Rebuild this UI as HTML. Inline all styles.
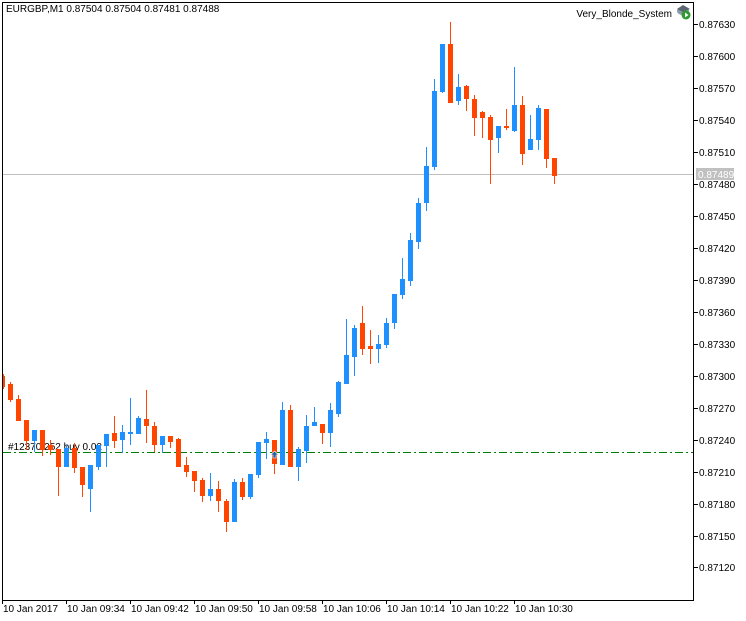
<!DOCTYPE html>
<html><head><meta charset="utf-8"><style>
html,body{margin:0;padding:0;background:#fff;width:746px;height:621px;overflow:hidden}
svg{display:block}
text{font-family:"Liberation Sans","DejaVu Sans",sans-serif;font-size:10px;fill:#000}
</style></head><body>
<svg width="746" height="621" viewBox="0 0 746 621" shape-rendering="crispEdges">
<rect width="746" height="621" fill="#fff"/>
<!-- current price line -->
<rect x="3" y="174" width="690" height="1" fill="#c0c0c0"/>
<!-- order line -->
<text x="8" y="450">#12370,252 buy 0.02</text>
<line x1="3" y1="452.5" x2="693" y2="452.5" stroke="#008000" stroke-width="1" stroke-dasharray="8 3 2 3"/>
<g id="c">
<g fill="#ff4500">
<rect x="3" y="374" width="1" height="15"/><rect x="3" y="376" width="2" height="11"/>
<rect x="10" y="382" width="1" height="20"/><rect x="8" y="384" width="5" height="16"/>
<rect x="18" y="395" width="1" height="26"/><rect x="16" y="399" width="5" height="22"/>
<rect x="26" y="420" width="1" height="30"/><rect x="24" y="420" width="5" height="21"/>
<rect x="42" y="430" width="1" height="26"/><rect x="40" y="430" width="5" height="20"/>
<rect x="50" y="440" width="1" height="15"/><rect x="48" y="445" width="5" height="5"/>
<rect x="58" y="449" width="1" height="47"/><rect x="56" y="449" width="5" height="18"/>
<rect x="74" y="443" width="1" height="30"/><rect x="72" y="448" width="5" height="20"/>
<rect x="82" y="467" width="1" height="30"/><rect x="80" y="467" width="5" height="18"/>
<rect x="114" y="416" width="1" height="32"/><rect x="112" y="433" width="5" height="8"/>
<rect x="146" y="390" width="1" height="53"/><rect x="144" y="419" width="5" height="7"/>
<rect x="154" y="422" width="1" height="30"/><rect x="152" y="426" width="5" height="19"/>
<rect x="170" y="436" width="1" height="12"/><rect x="168" y="436" width="5" height="6"/>
<rect x="178" y="438" width="1" height="29"/><rect x="176" y="439" width="5" height="28"/>
<rect x="186" y="457" width="1" height="20"/><rect x="184" y="465" width="5" height="7"/>
<rect x="194" y="471" width="1" height="21"/><rect x="192" y="471" width="5" height="10"/>
<rect x="202" y="478" width="1" height="24"/><rect x="200" y="480" width="5" height="16"/>
<rect x="218" y="481" width="1" height="31"/><rect x="216" y="489" width="5" height="12"/>
<rect x="226" y="499" width="1" height="33"/><rect x="224" y="501" width="5" height="21"/>
<rect x="242" y="478" width="1" height="22"/><rect x="240" y="482" width="5" height="15"/>
<rect x="274" y="440" width="1" height="34"/><rect x="272" y="440" width="5" height="24"/>
<rect x="290" y="405" width="1" height="62"/><rect x="288" y="410" width="5" height="57"/>
<rect x="322" y="424" width="1" height="20"/><rect x="320" y="424" width="5" height="9"/>
<rect x="362" y="306" width="1" height="49"/><rect x="360" y="323" width="5" height="26"/>
<rect x="370" y="330" width="1" height="34"/><rect x="368" y="346" width="5" height="3"/>
<rect x="450" y="22" width="1" height="81"/><rect x="448" y="44" width="5" height="59"/>
<rect x="466" y="85" width="1" height="26"/><rect x="464" y="86" width="5" height="13"/>
<rect x="474" y="95" width="1" height="41"/><rect x="472" y="99" width="5" height="19"/>
<rect x="482" y="111" width="1" height="27"/><rect x="480" y="112" width="5" height="6"/>
<rect x="490" y="115" width="1" height="69"/><rect x="488" y="117" width="5" height="23"/>
<rect x="506" y="109" width="1" height="21"/><rect x="504" y="126" width="5" height="2"/>
<rect x="522" y="96" width="1" height="69"/><rect x="520" y="105" width="5" height="49"/>
<rect x="546" y="109" width="1" height="59"/><rect x="544" y="109" width="5" height="50"/>
<rect x="554" y="158" width="1" height="26"/><rect x="552" y="158" width="5" height="18"/>
</g>
<g fill="#1e90ff">
<rect x="34" y="430" width="1" height="22"/><rect x="32" y="430" width="5" height="11"/>
<rect x="66" y="445" width="1" height="22"/><rect x="64" y="448" width="5" height="19"/>
<rect x="90" y="465" width="1" height="47"/><rect x="88" y="465" width="5" height="24"/>
<rect x="98" y="445" width="1" height="25"/><rect x="96" y="445" width="5" height="22"/>
<rect x="106" y="434" width="1" height="33"/><rect x="104" y="434" width="5" height="12"/>
<rect x="122" y="425" width="1" height="28"/><rect x="120" y="432" width="5" height="8"/>
<rect x="130" y="398" width="1" height="47"/><rect x="128" y="432" width="5" height="2"/>
<rect x="138" y="416" width="1" height="18"/><rect x="136" y="418" width="5" height="16"/>
<rect x="162" y="436" width="1" height="17"/><rect x="160" y="436" width="5" height="9"/>
<rect x="210" y="473" width="1" height="28"/><rect x="208" y="489" width="5" height="7"/>
<rect x="234" y="479" width="1" height="43"/><rect x="232" y="482" width="5" height="40"/>
<rect x="250" y="474" width="1" height="25"/><rect x="248" y="474" width="5" height="23"/>
<rect x="258" y="442" width="1" height="36"/><rect x="256" y="442" width="5" height="33"/>
<rect x="266" y="432" width="1" height="27"/><rect x="264" y="439" width="5" height="4"/>
<rect x="282" y="402" width="1" height="63"/><rect x="280" y="410" width="5" height="55"/>
<rect x="298" y="447" width="1" height="34"/><rect x="296" y="449" width="5" height="18"/>
<rect x="306" y="415" width="1" height="48"/><rect x="304" y="426" width="5" height="25"/>
<rect x="314" y="407" width="1" height="19"/><rect x="312" y="422" width="5" height="4"/>
<rect x="330" y="403" width="1" height="44"/><rect x="328" y="410" width="5" height="23"/>
<rect x="338" y="381" width="1" height="36"/><rect x="336" y="382" width="5" height="32"/>
<rect x="346" y="319" width="1" height="65"/><rect x="344" y="355" width="5" height="29"/>
<rect x="354" y="325" width="1" height="51"/><rect x="352" y="328" width="5" height="29"/>
<rect x="378" y="335" width="1" height="28"/><rect x="376" y="344" width="5" height="5"/>
<rect x="386" y="318" width="1" height="30"/><rect x="384" y="323" width="5" height="22"/>
<rect x="394" y="294" width="1" height="35"/><rect x="392" y="294" width="5" height="29"/>
<rect x="402" y="258" width="1" height="41"/><rect x="400" y="279" width="5" height="16"/>
<rect x="410" y="233" width="1" height="53"/><rect x="408" y="240" width="5" height="41"/>
<rect x="418" y="198" width="1" height="51"/><rect x="416" y="203" width="5" height="39"/>
<rect x="426" y="147" width="1" height="64"/><rect x="424" y="166" width="5" height="37"/>
<rect x="434" y="79" width="1" height="91"/><rect x="432" y="91" width="5" height="76"/>
<rect x="442" y="44" width="1" height="49"/><rect x="440" y="44" width="5" height="48"/>
<rect x="458" y="74" width="1" height="31"/><rect x="456" y="87" width="5" height="14"/>
<rect x="498" y="126" width="1" height="27"/><rect x="496" y="126" width="5" height="12"/>
<rect x="514" y="67" width="1" height="65"/><rect x="512" y="105" width="5" height="26"/>
<rect x="530" y="115" width="1" height="35"/><rect x="528" y="139" width="5" height="11"/>
<rect x="538" y="105" width="1" height="45"/><rect x="536" y="108" width="5" height="32"/>
</g>
</g>
<!-- buy arrow -->
<path d="M274.5 451 L278.5 455 L276 455 L276 458 L273 458 L273 455 L270.5 455 Z" fill="#1f5fa8" stroke="#fff" stroke-width="0.6" shape-rendering="auto"/>
<!-- frame -->
<rect x="2" y="2" width="691" height="1" fill="#000"/>
<rect x="2" y="2" width="1" height="599" fill="#000"/>
<rect x="693" y="2" width="1" height="599" fill="#000"/>
<rect x="2" y="600" width="692" height="1" fill="#000"/>
<!-- price axis -->
<g fill="#000">
<rect x="694" y="24" width="4" height="1"/><rect x="694" y="56" width="4" height="1"/><rect x="694" y="88" width="4" height="1"/>
<rect x="694" y="120" width="4" height="1"/><rect x="694" y="152" width="4" height="1"/><rect x="694" y="184" width="4" height="1"/>
<rect x="694" y="216" width="4" height="1"/><rect x="694" y="248" width="4" height="1"/><rect x="694" y="280" width="4" height="1"/>
<rect x="694" y="312" width="4" height="1"/><rect x="694" y="344" width="4" height="1"/><rect x="694" y="376" width="4" height="1"/>
<rect x="694" y="408" width="4" height="1"/><rect x="694" y="440" width="4" height="1"/><rect x="694" y="472" width="4" height="1"/>
<rect x="694" y="504" width="4" height="1"/><rect x="694" y="536" width="4" height="1"/><rect x="694" y="567" width="4" height="1"/>
</g>
<g>
<text x="699" y="28">0.87630</text><text x="699" y="60">0.87600</text><text x="699" y="92">0.87570</text>
<text x="699" y="124">0.87540</text><text x="699" y="156">0.87510</text><text x="699" y="188">0.87480</text>
<text x="699" y="220">0.87450</text><text x="699" y="252">0.87420</text><text x="699" y="284">0.87390</text>
<text x="699" y="316">0.87360</text><text x="699" y="348">0.87330</text><text x="699" y="380">0.87300</text>
<text x="699" y="412">0.87270</text><text x="699" y="444">0.87240</text><text x="699" y="476">0.87210</text>
<text x="699" y="508">0.87180</text><text x="699" y="540">0.87150</text><text x="699" y="571">0.87120</text>
</g>
<rect x="696" y="168" width="38" height="12" fill="#c0c0c0"/>
<text x="698" y="178" style="fill:#fff">0.87489</text>
<!-- time axis -->
<g fill="#000">
<rect x="2" y="601" width="1" height="3"/><rect x="66" y="601" width="1" height="3"/><rect x="130" y="601" width="1" height="3"/>
<rect x="194" y="601" width="1" height="3"/><rect x="258" y="601" width="1" height="3"/><rect x="322" y="601" width="1" height="3"/>
<rect x="386" y="601" width="1" height="3"/><rect x="450" y="601" width="1" height="3"/><rect x="514" y="601" width="1" height="3"/>
</g>
<g>
<text x="3" y="612">10 Jan 2017</text><text x="67" y="612">10 Jan 09:34</text><text x="131" y="612">10 Jan 09:42</text>
<text x="195" y="612">10 Jan 09:50</text><text x="259" y="612">10 Jan 09:58</text><text x="323" y="612">10 Jan 10:06</text>
<text x="387" y="612">10 Jan 10:14</text><text x="451" y="612">10 Jan 10:22</text><text x="515" y="612">10 Jan 10:30</text>
</g>
<!-- header -->
<text x="6" y="12">EURGBP,M1  0.87504 0.87504 0.87481 0.87488</text>
<text x="672" y="17" text-anchor="end">Very_Blonde_System</text>
<g shape-rendering="auto">
<ellipse cx="683" cy="11" rx="6" ry="4" fill="#8a9aa8"/>
<path d="M677 9 L683 5 L690 9 L683 12 Z" fill="#5a6670"/>
<circle cx="686" cy="15" r="4.5" fill="#2e9a2e"/>
<path d="M685 12.5 L688.5 15 L685 17.5 Z" fill="#fff"/>
</g>
</svg>
</body></html>
